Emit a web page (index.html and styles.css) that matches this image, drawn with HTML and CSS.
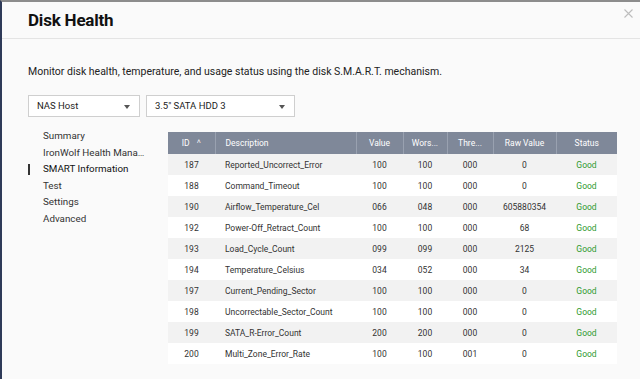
FILE: index.html
```html
<!DOCTYPE html>
<html lang="en">
<head>
  <meta charset="UTF-8" />
  <meta name="viewport" content="width=device-width, initial-scale=1.0" />
  <title>Disk Health</title>
  <link rel="stylesheet" href="styles.css">
</head>
<body>
  <div class="dialog">
    <header class="dialog-header">
      <h1>Disk Health</h1>
      <svg class="close" viewBox="0 0 9 9">
        <path d="M0.5 0.5 L8.5 8.5 M8.5 0.5 L0.5 8.5" />
      </svg>
    </header>

    <p class="intro">Monitor disk health, temperature, and usage status using the disk S.M.A.R.T. mechanism.</p>

    <div class="selectors">
      <div class="select host">NAS Host<span class="caret"></span></div>
      <div class="select disk">3.5" SATA HDD 3<span class="caret"></span></div>
    </div>

    <div class="body">
      <nav class="side-nav">
        <div class="nav-item">Summary</div>
        <div class="nav-item">IronWolf Health Management</div>
        <div class="nav-item active">SMART Information</div>
        <div class="nav-item">Test</div>
        <div class="nav-item">Settings</div>
        <div class="nav-item">Advanced</div>
      </nav>

      <table class="smart-table">
        <colgroup>
          <col class="c-id">
          <col class="c-desc">
          <col class="c-val">
          <col class="c-worst">
          <col class="c-thr">
          <col class="c-raw">
          <col class="c-status">
        </colgroup>
        <thead>
          <tr>
            <th>ID <span class="sort">&#x2c4;</span></th>
            <th class="desc">Description</th>
            <th>Value</th>
            <th>Wors...</th>
            <th>Thre...</th>
            <th>Raw Value</th>
            <th>Status</th>
          </tr>
        </thead>
        <tbody>
          <tr><td>187</td><td class="desc">Reported_Uncorrect_Error</td><td>100</td><td>100</td><td>000</td><td>0</td><td class="good">Good</td></tr>
          <tr><td>188</td><td class="desc">Command_Timeout</td><td>100</td><td>100</td><td>000</td><td>0</td><td class="good">Good</td></tr>
          <tr><td>190</td><td class="desc">Airflow_Temperature_Cel</td><td>066</td><td>048</td><td>000</td><td>605880354</td><td class="good">Good</td></tr>
          <tr><td>192</td><td class="desc">Power-Off_Retract_Count</td><td>100</td><td>100</td><td>000</td><td>68</td><td class="good">Good</td></tr>
          <tr><td>193</td><td class="desc">Load_Cycle_Count</td><td>099</td><td>099</td><td>000</td><td>2125</td><td class="good">Good</td></tr>
          <tr><td>194</td><td class="desc">Temperature_Celsius</td><td>034</td><td>052</td><td>000</td><td>34</td><td class="good">Good</td></tr>
          <tr><td>197</td><td class="desc">Current_Pending_Sector</td><td>100</td><td>100</td><td>000</td><td>0</td><td class="good">Good</td></tr>
          <tr><td>198</td><td class="desc">Uncorrectable_Sector_Count</td><td>100</td><td>100</td><td>000</td><td>0</td><td class="good">Good</td></tr>
          <tr><td>199</td><td class="desc">SATA_R-Error_Count</td><td>200</td><td>200</td><td>000</td><td>0</td><td class="good">Good</td></tr>
          <tr><td>200</td><td class="desc">Multi_Zone_Error_Rate</td><td>100</td><td>100</td><td>001</td><td>0</td><td class="good">Good</td></tr>
        </tbody>
      </table>
    </div>
  </div>
</body>
</html>
```

FILE: styles.css
```css
body {
  margin: 0;
  font-family: Roboto, "Liberation Sans", Arial, sans-serif;
  background: #fafafa;
  color: #333;
  overflow: hidden;
}

.dialog {
  height: 379px;
  box-sizing: border-box;
  border-top: 2px solid #8c8c8c;
  border-left: 2px solid #2e3a58;
  background: #fafafa;
}

.dialog-header {
  height: 37px;
  padding: 0 7px 0 26px;
  display: flex;
  align-items: center;
  justify-content: space-between;
  border-bottom: 1px solid #e4e4e4;
  box-sizing: border-box;
}

.dialog-header h1 {
  margin: 0;
  font-size: 17px;
  font-weight: bold;
  color: #111;
  letter-spacing: -0.2px;
}

.close {
  width: 9px;
  height: 9px;
  align-self: flex-start;
  margin-top: 7px;
  fill: none;
  stroke: #bdbdbd;
  stroke-width: 1.1;
}

.intro {
  margin: 26px 0 0 26px;
  font-size: 10.5px;
  line-height: 13px;
  color: #222;
}

.selectors {
  display: flex;
  gap: 6px;
  margin: 17px 0 0 26px;
}

.select {
  position: relative;
  height: 22px;
  box-sizing: border-box;
  border: 1px solid #cfcfcf;
  background: #fff;
  font-size: 9.5px;
  line-height: 20px;
  padding-left: 8px;
  color: #222;
}

.select.host {
  width: 112px;
}

.select.disk {
  width: 149px;
}

.caret {
  position: absolute;
  right: 9px;
  top: 9px;
  width: 0;
  height: 0;
  border-left: 3px solid transparent;
  border-right: 3px solid transparent;
  border-top: 4px solid #555;
}

.body {
  display: flex;
  margin-top: 11px;
  padding-left: 26px;
}

.side-nav {
  width: 140px;
  flex-shrink: 0;
}

.nav-item {
  height: 16.6px;
  line-height: 16.6px;
  font-size: 9.8px;
  color: #333;
  padding-left: 15px;
  width: 102px;
  white-space: nowrap;
  overflow: hidden;
  text-overflow: ellipsis;
  position: relative;
}

.nav-item.active {
  color: #111;
  overflow: visible;
}

.nav-item.active::before {
  content: "";
  position: absolute;
  left: 0;
  top: 3px;
  width: 2px;
  height: 11px;
  background: #333;
}

.smart-table {
  width: 449px;
  border-collapse: collapse;
  font-size: 8.5px;
  table-layout: fixed;
  margin-top: 4px;
  align-self: flex-start;
}

.c-id { width: 47px; }
.c-desc { width: 141px; }
.c-val { width: 47px; }
.c-worst { width: 44px; }
.c-thr { width: 46px; }
.c-raw { width: 63px; }
.c-status { width: 61px; }

.smart-table th {
  height: 22px;
  background: #7f8899;
  color: #fff;
  font-weight: normal;
  text-align: center;
  border-left: 1px solid #99a1b0;
  padding: 0;
  white-space: nowrap;
}

.smart-table th:first-child {
  border-left: none;
}

.sort {
  font-size: 7px;
  margin-left: 5px;
  vertical-align: top;
}

.smart-table td {
  height: 21px;
  padding: 0;
  text-align: center;
  color: #333;
}

.smart-table .desc {
  text-align: left;
  padding-left: 10px;
}

.smart-table tbody tr:nth-child(odd) {
  background: #f2f2f2;
}

.smart-table tbody tr:nth-child(even) {
  background: #fff;
}

.smart-table td.good {
  color: #2f9a2f;
}
```
